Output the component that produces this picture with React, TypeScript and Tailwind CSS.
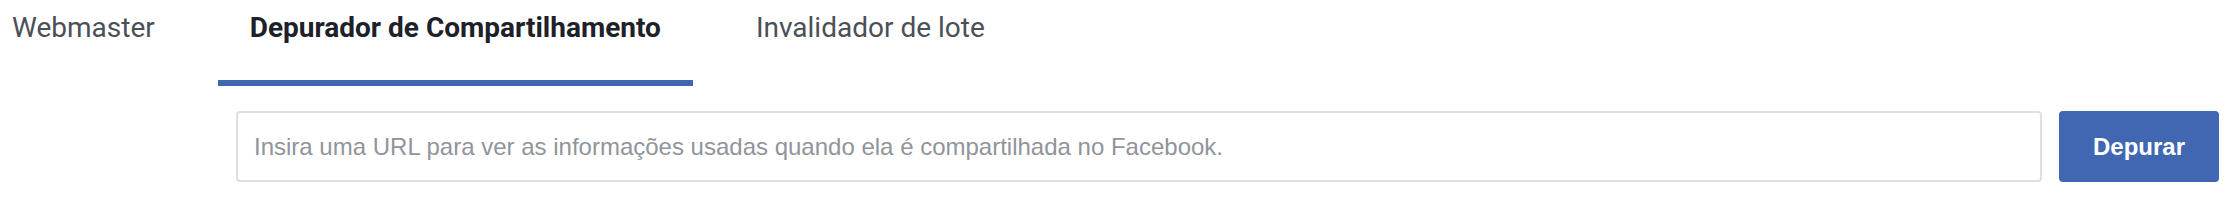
export default function App() {
  return (
    <div className="w-[2234px] h-[204px] bg-white overflow-hidden">
      <div className="flex h-[86px] font-['Roboto',sans-serif] text-[28px] leading-none">
        <div className="pl-[12px] pr-8 pt-[14px] text-[#4b4f56]">Webmaster</div>
        <div className="ml-[31px] px-8 pt-[14px] font-bold text-[#1d2129] border-b-[6px] border-[#4267b2]">
          Depurador de Compartilhamento
        </div>
        <div className="ml-[31px] px-8 pt-[14px] text-[#4b4f56]">Invalidador de lote</div>
      </div>
      <div className="flex gap-[17px] pl-[236px] pr-[15px] pt-[25px] font-['Liberation_Sans',Arial,sans-serif]">
        <div className="flex-1 h-[71px] flex items-center px-[16px] border-2 border-[#dddfe2] rounded-[4px] text-[24px] text-[#90949c]">
          Insira uma URL para ver as informações usadas quando ela é compartilhada no Facebook.
        </div>
        <button className="w-[160px] h-[71px] rounded-[4px] bg-[#4267b2] text-white font-bold text-[24px]">
          Depurar
        </button>
      </div>
    </div>
  );
}
